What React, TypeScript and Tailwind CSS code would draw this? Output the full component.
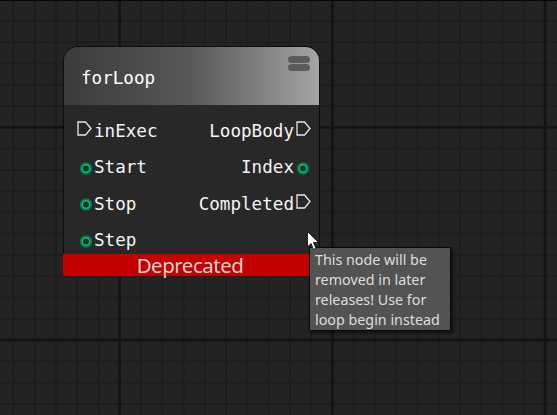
import React from "react";

const minorX = Array.from({ length: 27 }, (_, i) => 13.4 + i * 21.27);
const minorY = Array.from({ length: 19 }, (_, i) => 21 + i * 21.27);

function Grid() {
  return (
    <svg className="absolute inset-0" width="557" height="415">
      <g stroke="#1d1d1d" strokeWidth="1.7">
        {minorX.map((x) => <line key={x} x1={x} x2={x} y1="0" y2="415" />)}
        {minorY.map((y) => <line key={y} x1="0" x2="557" y1={y} y2={y} />)}
      </g>
      <g stroke="#141414" strokeWidth="2.8">
        {[119.6, 332.4, 545.1].map((x) => <line key={x} x1={x} x2={x} y1="0" y2="415" />)}
        {[127.4, 340].map((y) => <line key={y} x1="0" x2="557" y1={y} y2={y} />)}
      </g>
      <rect width="557" height="1" fill="#080808" />
    </svg>
  );
}

function ExecPin() {
  return (
    <svg width="15" height="15" viewBox="0 0 15 15" className="-mt-[4px] shrink-0">
      <path d="M1 1H8.5L14 7.5L8.5 14H1Z" fill="none" stroke="#e8e8e8" strokeWidth="1.3" />
    </svg>
  );
}

function DataPin() {
  return (
    <svg width="13" height="13" viewBox="0 0 13 13" className="mt-[2px] shrink-0">
      <circle cx="6.5" cy="6.5" r="6.3" fill="#09734a" />
      <circle cx="6.5" cy="6.5" r="3.7" fill="#062c1c" stroke="#00c77b" strokeWidth="1.5" />
    </svg>
  );
}

function Pin({ name, exec = false, output = false }: { name: string; exec?: boolean; output?: boolean }) {
  const icon = exec ? <ExecPin /> : <DataPin />;
  return (
    <div className={output ? "flex h-[36.5px] items-center justify-end gap-[2px]" : "flex h-[36.5px] items-center gap-[2px]"}>
      {!output && <span className={exec ? "flex w-[15px]" : "flex w-[15px] translate-x-[2.5px]"}>{icon}</span>}
      <span>{name}</span>
      {output && <span className={exec ? "flex w-[15px]" : "flex w-[15px] translate-x-[0.5px]"}>{icon}</span>}
    </div>
  );
}

export default function App() {
  return (
    <main className="relative h-[415px] w-[557px] overflow-hidden bg-[#232323]">
      <Grid />
      <section className="absolute left-[63px] top-[46px] w-[257px] font-['DejaVu_Sans_Mono',monospace] text-[17.6px] leading-[22px] text-[#f5f5f5]">
        <div className="flex h-[208px] flex-col overflow-hidden rounded-t-[15px] border-[1.5px] border-b-0 border-[#0c0c0c] bg-[#282828]">
          <header className="flex h-[58px] shrink-0 justify-between bg-linear-to-r from-[#3b3b3b] via-[#595959] to-[#a5a5a5] pr-[9px] pl-[17px]">
            <h1 className="mt-[20px] text-white">forLoop</h1>
            <div className="mt-[9px] flex flex-col gap-px">
              <i className="h-[7px] w-[22px] rounded-full bg-[#5b5b5b]" />
              <i className="h-[7px] w-[22px] rounded-full bg-[#5b5b5b]" />
            </div>
          </header>
          <div className="flex justify-between pt-[7.3px] pr-[8px] pl-[13px]">
            <div>
              <Pin name="inExec" exec />
              <Pin name="Start" />
              <Pin name="Stop" />
              <Pin name="Step" />
            </div>
            <div>
              <Pin name="LoopBody" exec output />
              <Pin name="Index" output />
              <Pin name="Completed" exec output />
            </div>
          </div>
        </div>
        <div className="flex h-[22px] items-center justify-center bg-[#c40000] font-['Noto_Sans',sans-serif] text-[20.5px] tracking-[-0.5px] text-[#d2d2d2]">
          <span className="mr-[3px]">Deprecated</span>
        </div>
      </section>
      <aside className="absolute left-[309px] top-[247px] h-[84px] w-[142px] border border-[#080808] bg-[#535353] pt-[2px] pl-[5px] font-['Noto_Sans',sans-serif] text-[14.3px] leading-[20px] whitespace-nowrap text-[#dedede] shadow-[2px_2px_3px_#0008]">
        <div>This node will be</div>
        <div>removed in later</div>
        <div>releases! Use for</div>
        <div>loop begin instead</div>
      </aside>
      <svg className="absolute left-[307px] top-[231px]" width="13" height="20" viewBox="0 0 13 20">
        <path d="M.5 .5V16L4 12.5L6.5 18.5L9 17.4L6.5 11.5H11.5Z" fill="white" stroke="#111" strokeWidth=".9" />
      </svg>
    </main>
  );
}
